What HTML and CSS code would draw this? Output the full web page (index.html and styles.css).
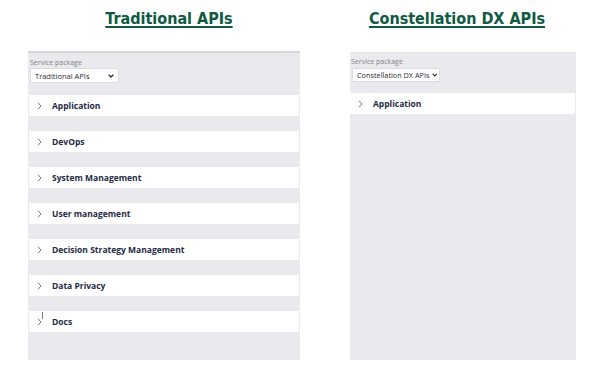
FILE: index.html
```html
<!DOCTYPE html>
<html>
<head>
<meta charset="utf-8">
<link rel="stylesheet" href="styles.css">
</head>
<body>
<div class="page">
  <div class="col col-left">
    <h1 class="title title-left">Traditional APIs</h1>
    <div class="panel panel-left">
      <div class="label">Service package</div>
      <div class="select select-left"><span>Traditional APIs</span><svg class="caret" width="6" height="4" viewBox="0 0 6 4"><polyline points="0.7,0.7 3,3 5.3,0.7" fill="none" stroke="#333" stroke-width="1.3"/></svg></div>
      <div class="list list-left">
        <div class="row"><svg class="chev" width="5" height="8" viewBox="0 0 5 8"><polyline points="1,0.8 4,4 1,7.2" fill="none" stroke="#666" stroke-width="0.9"/></svg><span class="name">Application</span></div>
        <div class="row"><svg class="chev" width="5" height="8" viewBox="0 0 5 8"><polyline points="1,0.8 4,4 1,7.2" fill="none" stroke="#666" stroke-width="0.9"/></svg><span class="name">DevOps</span></div>
        <div class="row"><svg class="chev" width="5" height="8" viewBox="0 0 5 8"><polyline points="1,0.8 4,4 1,7.2" fill="none" stroke="#666" stroke-width="0.9"/></svg><span class="name">System Management</span></div>
        <div class="row"><svg class="chev" width="5" height="8" viewBox="0 0 5 8"><polyline points="1,0.8 4,4 1,7.2" fill="none" stroke="#666" stroke-width="0.9"/></svg><span class="name">User management</span></div>
        <div class="row"><svg class="chev" width="5" height="8" viewBox="0 0 5 8"><polyline points="1,0.8 4,4 1,7.2" fill="none" stroke="#666" stroke-width="0.9"/></svg><span class="name">Decision Strategy Management</span></div>
        <div class="row"><svg class="chev" width="5" height="8" viewBox="0 0 5 8"><polyline points="1,0.8 4,4 1,7.2" fill="none" stroke="#666" stroke-width="0.9"/></svg><span class="name">Data Privacy</span></div>
        <div class="row"><svg class="chev" width="5" height="8" viewBox="0 0 5 8"><polyline points="1,0.8 4,4 1,7.2" fill="none" stroke="#666" stroke-width="0.9"/></svg><span class="cursor"></span><span class="name">Docs</span></div>
      </div>
    </div>
  </div>
  <div class="col col-right">
    <h1 class="title title-right">Constellation DX APIs</h1>
    <div class="panel panel-right">
      <div class="label">Service package</div>
      <div class="select select-right"><span>Constellation DX APIs</span><svg class="caret" width="6" height="4" viewBox="0 0 6 4"><polyline points="0.7,0.7 3,3 5.3,0.7" fill="none" stroke="#333" stroke-width="1.3"/></svg></div>
      <div class="list list-right">
        <div class="row"><svg class="chev" width="5" height="8" viewBox="0 0 5 8"><polyline points="1,0.8 4,4 1,7.2" fill="none" stroke="#666" stroke-width="0.9"/></svg><span class="name">Application</span></div>
      </div>
    </div>
  </div>
</div>
</body>
</html>
```
FILE: styles.css
```css
html, body {
  margin: 0;
  padding: 0;
  background: #ffffff;
}
body {
  width: 602px;
  height: 371px;
  overflow: hidden;
  font-family: "Open Sans", "Liberation Sans", sans-serif;
}
.page {
  display: flex;
  padding-left: 28px;
  gap: 50px;
}
.col {
  display: flex;
  flex-direction: column;
}
.col-left { width: 272px; }
.col-right { width: 226px; }
.title {
  margin: 0;
  height: 51px;
  box-sizing: border-box;
  padding-top: 9px;
  font-family: "Liberation Sans Narrow", "DejaVu Sans Condensed", sans-serif;
  font-weight: bold;
  font-size: 16px;
  line-height: 20px;
  color: #0e5a43;
  text-align: center;
  text-decoration: underline;
  text-decoration-thickness: 1.5px;
  text-underline-offset: 2px;
}
.title-left { padding-left: 10px; }
.title-right { padding-right: 12px; }
.panel {
  background: #e9e9ee;
  display: flex;
  flex-direction: column;
  box-sizing: border-box;
}
.panel-left {
  height: 309px;
  border-top: 2px solid #d6d7dc;
  padding: 5px 1px 0 1px;
}
.panel-right {
  height: 308px;
  margin-top: 1px;
  border-top: 1px solid #e2e3e8;
  padding: 4px 1px 0 0;
}
.label {
  font-size: 7px;
  line-height: 9px;
  color: #84848a;
  padding-left: 1px;
  white-space: nowrap;
}
.select {
  margin-top: 1px;
  margin-left: 1px;
  background: #ffffff;
  border: 1px solid #dcdce0;
  border-radius: 1px;
  box-sizing: border-box;
  display: flex;
  align-items: center;
  justify-content: space-between;
  gap: 2px;
  white-space: nowrap;
  font-size: 7.5px;
  color: #2a2a30;
  padding: 0 4px 0 4px;
}
.select-left { width: 89px; height: 15px; }
.select-right { width: 88px; height: 14px; margin-left: 2px; margin-top: 2px; padding: 0 2px 0 4px; font-size: 7.3px; }
.list {
  display: flex;
  flex-direction: column;
  gap: 15px;
}
.list-left { margin-top: 12px; }
.list-right { margin-top: 11px; }
.row {
  position: relative;
  background: #ffffff;
  height: 21px;
  display: flex;
  align-items: center;
  padding-left: 8px;
}
.chev { flex: none; }
.name {
  margin-left: 10px;
  font-size: 8.5px;
  font-weight: 700;
  color: #232a45;
  white-space: nowrap;
}
.cursor {
  position: absolute;
  left: 13px;
  top: 1px;
  width: 1px;
  height: 7px;
  background: #777;
}
```
